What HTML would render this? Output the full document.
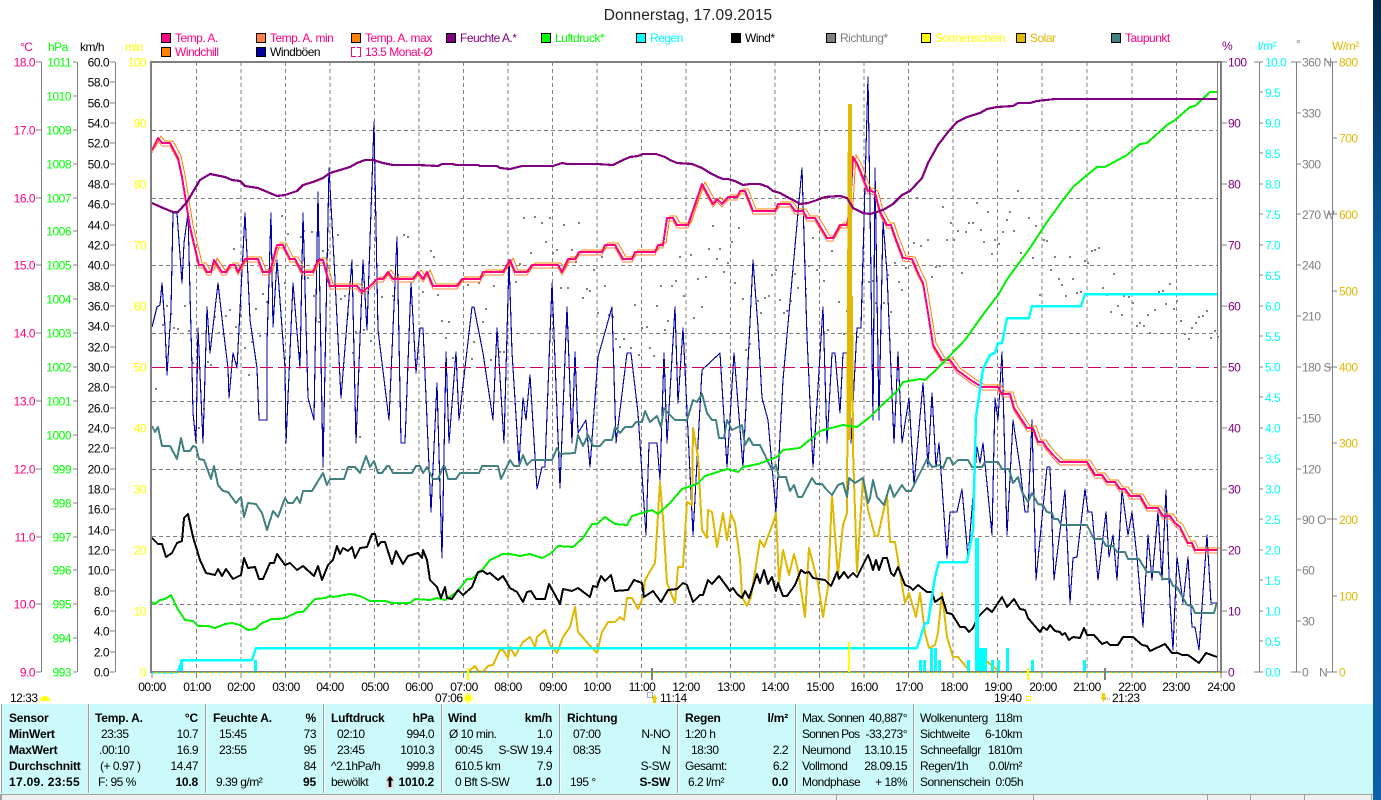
<!DOCTYPE html>
<html lang="de"><head><meta charset="utf-8"><title>Donnerstag, 17.09.2015</title>
<style>
html,body{margin:0;padding:0;background:#fff;width:1381px;height:800px;overflow:hidden}
svg{display:block}
text{font-family:"Liberation Sans",sans-serif;font-size:12px;letter-spacing:-.5px;fill:#000}
.e{text-anchor:end}
.b{font-weight:bold;letter-spacing:-.2px}
.n{letter-spacing:-.8px}
.l{fill:#ff0080}
.g{fill:#00ff00}
.y{fill:#ffff00}
.p{fill:#800080}
.c{fill:#00ffff}
.s{fill:#808080}
.o{fill:#e0b800}
polyline{fill:none;stroke-linejoin:round;shape-rendering:crispEdges}
</style></head><body>
<svg width="1381" height="800" viewBox="0 0 1381 800" xmlns="http://www.w3.org/2000/svg">
<defs><linearGradient id="dk" x1="0" y1="0" x2="0" y2="1"><stop offset="0" stop-color="#03264a"/><stop offset=".3" stop-color="#0a5596"/><stop offset="1" stop-color="#0d5fa8"/></linearGradient>
<polyline id="t" points="152,150 158,138 162,143 170,143 178,158 182,177 190,227 199,265 203,265 207,272 211,272 214,260 218,266 222,272 226,272 230,265 235,265 238,272 245,259 258,259 263,272 270,272 277,245 283,245 290,259 295,259 302,272 313,272 318,260 323,260 330,286 357,286 362,292 370,286 377,279 383,279 388,272 393,279 413,279 418,272 423,279 427,272 433,286 457,286 462,279 480,279 483,272 503,272 510,260 515,272 527,272 532,265 558,265 562,272 568,259 575,259 579,252 602,252 605,245 615,245 623,259 632,259 635,252 655,252 658,245 663,245 667,218 673,218 677,225 688,225 702,184 713,204 717,199 722,204 728,197 737,197 740,191 745,191 753,211 775,211 778,204 790,204 795,211 803,211 807,218 815,218 827,238 833,238 840,225 847,225 850,207 853,157 858,165 868,191 870,190 875,193 880,212 887,225 891,225 895,237 903,258 912,259 918,273 923,283 928,313 933,345 942,360 950,360 957,370 972,381 982,387 998,387 1002,394 1010,394 1014,408 1027,428 1033,428 1038,442 1043,442 1047,448 1053,455 1060,462 1087,462 1095,475 1102,475 1107,482 1115,482 1120,489 1125,489 1130,496 1140,496 1147,508 1158,508 1163,516 1170,516 1175,523 1180,527 1188,543 1192,543 1195,550 1217,550"/></defs>

<rect x="1373" y="0" width="8" height="800" fill="url(#dk)"/>

<text x="688" y="20" text-anchor="middle" style="font-size:15.5px;letter-spacing:.1px;fill:#222">Donnerstag, 17.09.2015</text>

<!-- legend -->
<g stroke="#000" stroke-width="1" shape-rendering="crispEdges">
<rect x="161.5" y="33.5" width="9" height="9" fill="#ff0080"/><rect x="256.5" y="33.5" width="9" height="9" fill="#ff8040"/><rect x="351.5" y="33.5" width="9" height="9" fill="#ff8000"/><rect x="446.5" y="33.5" width="9" height="9" fill="#800080"/><rect x="541.5" y="33.5" width="9" height="9" fill="#00ff00"/><rect x="636.5" y="33.5" width="9" height="9" fill="#00ffff"/><rect x="731.5" y="33.5" width="9" height="9" fill="#000"/><rect x="826.5" y="33.5" width="9" height="9" fill="#808080"/><rect x="921.5" y="33.5" width="9" height="9" fill="#ffff00"/><rect x="1016.5" y="33.5" width="9" height="9" fill="#e0b800"/><rect x="1111.5" y="33.5" width="9" height="9" fill="#408080"/>
<rect x="161.5" y="47.5" width="9" height="9" fill="#ff8000"/><rect x="256.5" y="47.5" width="9" height="9" fill="#0000a0"/>
<path d="M355 47.500H351.500V56.500H356M357 47.500h3.500v9H358" fill="none" stroke="#ff0080"/>
</g>
<text x="175" y="42" class="l">Temp. A.</text><text x="270" y="42" class="l">Temp. A. min</text><text x="365" y="42" class="l">Temp. A. max</text><text x="460" y="42" class="p">Feuchte A.*</text><text x="555" y="42" class="g">Luftdruck*</text><text x="650" y="42" class="c">Regen</text><text x="745" y="42">Wind*</text><text x="840" y="42" class="s">Richtung*</text><text x="935" y="42" class="y">Sonnenschein</text><text x="1030" y="42" class="o">Solar</text><text x="1125" y="42" class="l">Taupunkt</text>
<text x="175" y="56" class="l">Windchill</text><text x="270" y="56">Windböen</text><text x="365" y="56" class="l">13.5 Monat-Ø</text>

<!-- axis headers -->
<text x="20" y="51" class="l">°C</text><text x="48" y="51" class="g">hPa</text><text x="80" y="51">km/h</text><text x="125" y="51" class="y">min</text>
<text x="1222" y="50" class="p">%</text><text x="1258" y="50" class="c">l/m²</text><text x="1296" y="48" class="s">°</text><text x="1332" y="50" class="o">W/m²</text>

<!-- left axes -->
<path shape-rendering="crispEdges" stroke="#808080" fill="none" d="M41.5 62V672M36 62h5M36 130h5M36 198h5M36 265h5M36 333h5M36 401h5M36 469h5M36 537h5M36 604h5M36 672h5
M77.5 62V672M73 62h4M73 96h4M73 130h4M73 164h4M73 198h4M73 231h4M73 265h4M73 299h4M73 333h4M73 367h4M73 401h4M73 435h4M73 469h4M73 503h4M73 537h4M73 570h4M73 604h4M73 638h4M73 672h4
M115.5 62V672M110 62h5M110 82h5M110 103h5M110 123h5M110 143h5M110 164h5M110 184h5M110 204h5M110 225h5M110 245h5M110 265h5M110 286h5M110 306h5M110 326h5M110 347h5M110 367h5M110 387h5M110 408h5M110 428h5M110 448h5M110 469h5M110 489h5M110 509h5M110 530h5M110 550h5M110 570h5M110 591h5M110 611h5M110 631h5M110 652h5M110 672h5"/>
<g class="e">
<text x="35" y="66.5" class="e l">18.0</text><text x="35" y="134.5" class="e l">17.0</text><text x="35" y="202.5" class="e l">16.0</text><text x="35" y="269.5" class="e l">15.0</text><text x="35" y="337.5" class="e l">14.0</text><text x="35" y="405.5" class="e l">13.0</text><text x="35" y="473.5" class="e l">12.0</text><text x="35" y="541.5" class="e l">11.0</text><text x="35" y="608.5" class="e l">10.0</text><text x="35" y="676.5" class="e l">9.0</text>
<text x="71" y="66.5" class="e g">1011</text><text x="71" y="100.5" class="e g">1010</text><text x="71" y="134.5" class="e g">1009</text><text x="71" y="168.5" class="e g">1008</text><text x="71" y="202.5" class="e g">1007</text><text x="71" y="235.5" class="e g">1006</text><text x="71" y="269.5" class="e g">1005</text><text x="71" y="303.5" class="e g">1004</text><text x="71" y="337.5" class="e g">1003</text><text x="71" y="371.5" class="e g">1002</text><text x="71" y="405.5" class="e g">1001</text><text x="71" y="439.5" class="e g">1000</text><text x="71" y="473.5" class="e g">999</text><text x="71" y="507.5" class="e g">998</text><text x="71" y="541.5" class="e g">997</text><text x="71" y="574.5" class="e g">996</text><text x="71" y="608.5" class="e g">995</text><text x="71" y="642.5" class="e g">994</text><text x="71" y="676.5" class="e g">993</text>
<text x="109" y="66.5" class="e">60.0</text><text x="109" y="86.5" class="e">58.0</text><text x="109" y="107.5" class="e">56.0</text><text x="109" y="127.5" class="e">54.0</text><text x="109" y="147.5" class="e">52.0</text><text x="109" y="168.5" class="e">50.0</text><text x="109" y="188.5" class="e">48.0</text><text x="109" y="208.5" class="e">46.0</text><text x="109" y="229.5" class="e">44.0</text><text x="109" y="249.5" class="e">42.0</text><text x="109" y="269.5" class="e">40.0</text><text x="109" y="290.5" class="e">38.0</text><text x="109" y="310.5" class="e">36.0</text><text x="109" y="330.5" class="e">34.0</text><text x="109" y="351.5" class="e">32.0</text><text x="109" y="371.5" class="e">30.0</text><text x="109" y="391.5" class="e">28.0</text><text x="109" y="412.5" class="e">26.0</text><text x="109" y="432.5" class="e">24.0</text><text x="109" y="452.5" class="e">22.0</text><text x="109" y="473.5" class="e">20.0</text><text x="109" y="493.5" class="e">18.0</text><text x="109" y="513.5" class="e">16.0</text><text x="109" y="534.5" class="e">14.0</text><text x="109" y="554.5" class="e">12.0</text><text x="109" y="574.5" class="e">10.0</text><text x="109" y="595.5" class="e">8.0</text><text x="109" y="615.5" class="e">6.0</text><text x="109" y="635.5" class="e">4.0</text><text x="109" y="656.5" class="e">2.0</text><text x="109" y="676.5" class="e">0.0</text>
<text x="146" y="66.5" class="e y">100</text><text x="146" y="127.5" class="e y">90</text><text x="146" y="188.5" class="e y">80</text><text x="146" y="249.5" class="e y">70</text><text x="146" y="310.5" class="e y">60</text><text x="146" y="371.5" class="e y">50</text><text x="146" y="432.5" class="e y">40</text><text x="146" y="493.5" class="e y">30</text><text x="146" y="554.5" class="e y">20</text><text x="146" y="615.5" class="e y">10</text><text x="146" y="676.5" class="e y">0</text>
</g>

<!-- right axes -->
<path shape-rendering="crispEdges" stroke="#808080" fill="none" d="M1222 62h5M1222 123h5M1222 184h5M1222 245h5M1222 306h5M1222 367h5M1222 428h5M1222 489h5M1222 550h5M1222 611h5M1222 672h5
M1259.5 62V672M1254 62h5M1254 672h5M1259 62h4M1259 92h4M1259 123h4M1259 153h4M1259 184h4M1259 214h4M1259 245h4M1259 275h4M1259 306h4M1259 336h4M1259 367h4M1259 397h4M1259 428h4M1259 458h4M1259 489h4M1259 519h4M1259 550h4M1259 580h4M1259 611h4M1259 641h4M1259 672h4
M1296.5 62V672M1291 62h5M1291 672h5M1296 62h5M1296 113h5M1296 164h5M1296 214h5M1296 265h5M1296 316h5M1296 367h5M1296 418h5M1296 469h5M1296 519h5M1296 570h5M1296 621h5M1296 672h5
M1332.5 62V672M1327 62h5M1327 214h5M1327 367h5M1327 519h5M1327 672h5M1332 62h5M1332 138h5M1332 214h5M1332 291h5M1332 367h5M1332 443h5M1332 519h5M1332 596h5M1332 672h5"/>
<text x="1228" y="66.5" class="p">100</text><text x="1228" y="127.5" class="p">90</text><text x="1228" y="188.5" class="p">80</text><text x="1228" y="249.5" class="p">70</text><text x="1228" y="310.5" class="p">60</text><text x="1228" y="371.5" class="p">50</text><text x="1228" y="432.5" class="p">40</text><text x="1228" y="493.5" class="p">30</text><text x="1228" y="554.5" class="p">20</text><text x="1228" y="615.5" class="p">10</text><text x="1228" y="676.5" class="p">0</text>
<text x="1265" y="66.5" class="c">10.0</text><text x="1265" y="97" class="c">9.5</text><text x="1265" y="127.5" class="c">9.0</text><text x="1265" y="158" class="c">8.5</text><text x="1265" y="188.5" class="c">8.0</text><text x="1265" y="219" class="c">7.5</text><text x="1265" y="249.5" class="c">7.0</text><text x="1265" y="280" class="c">6.5</text><text x="1265" y="310.5" class="c">6.0</text><text x="1265" y="341" class="c">5.5</text><text x="1265" y="371.5" class="c">5.0</text><text x="1265" y="402" class="c">4.5</text><text x="1265" y="432.5" class="c">4.0</text><text x="1265" y="463" class="c">3.5</text><text x="1265" y="493.5" class="c">3.0</text><text x="1265" y="524" class="c">2.5</text><text x="1265" y="554.5" class="c">2.0</text><text x="1265" y="585" class="c">1.5</text><text x="1265" y="615.5" class="c">1.0</text><text x="1265" y="646" class="c">0.5</text><text x="1265" y="676.5" class="c">0.0</text>
<text x="1302" y="66.5" class="s">360 N</text><text x="1302" y="117.5" class="s">330</text><text x="1302" y="168.5" class="s">300</text><text x="1302" y="219" class="s">270 W</text><text x="1302" y="269.5" class="s">240</text><text x="1302" y="320.5" class="s">210</text><text x="1302" y="371.5" class="s">180 S</text><text x="1302" y="422.5" class="s">150</text><text x="1302" y="473.5" class="s">120</text><text x="1302" y="524" class="s">90 O</text><text x="1302" y="574.5" class="s">60</text><text x="1302" y="625.5" class="s">30</text><text x="1302" y="676.5" class="s">0</text><text x="1319" y="676.5" class="s">N</text>
<text x="1339" y="66.5" class="o">800</text><text x="1339" y="142.5" class="o">700</text><text x="1339" y="219" class="o">600</text><text x="1339" y="295.5" class="o">500</text><text x="1339" y="371.5" class="o">400</text><text x="1339" y="447.5" class="o">300</text><text x="1339" y="524" class="o">200</text><text x="1339" y="600.5" class="o">100</text><text x="1339" y="676.5" class="o">0</text>

<!-- grid -->
<path shape-rendering="crispEdges" stroke="#808080" fill="none" stroke-dasharray="4 3" d="M196.5 62V672M241 62V672M285.5 62V672M330 62V672M374.5 62V672M419 62V672M463.5 62V672M508 62V672M552.5 62V672M597 62V672M641.5 62V672M686 62V672M730.5 62V672M775 62V672M819.5 62V672M864 62V672M908.5 62V672M953 62V672M997.5 62V672M1042 62V672M1087 62V672M1132 62V672M1176.5 62V672
M152 130.5H1217M152 198.5H1217M152 265.5H1217M152 333.5H1217M152 401.5H1217M152 469.5H1217M152 536.5H1217M152 604.5H1217"/>
<path shape-rendering="crispEdges" stroke="#808080" fill="none" d="M152 672v6M196.5 672v6M241 672v6M285.5 672v6M330 672v6M374.5 672v6M419 672v6M463.5 672v6M508 672v6M552.5 672v6M597 672v6M641.5 672v6M686 672v6M730.5 672v6M775 672v6M819.5 672v6M864 672v6M908.5 672v6M953 672v6M997.5 672v6M1042 672v6M1087 672v6M1132 672v6M1176.5 672v6M1221 672v6"/>

<!-- direction dots -->
<path stroke="#808080" stroke-width="2" fill="none" shape-rendering="crispEdges" d="M281 216h2M287 234h2M303 231h2M311 232h2M300 237h2M337 235h2M233 249h2M403 235h2M407 237h2M396 250h2M430 251h2M433 257h2M327 250h2M322 251h2M307 278h2M181 277h2M284 283h2M262 294h2M313 296h2M266 302h2M184 306h2M166 306h2M170 314h2M162 325h2M173 328h2M177 329h2M188 331h2M229 310h2M225 316h2M214 317h2M255 309h2M240 306h2M240 316h2M235 327h2M218 333h2M222 334h2M259 336h2M251 342h2M244 348h2M340 299h2M344 296h2M381 297h2M392 296h2M422 292h2M437 295h2M457 284h2M467 285h2M478 283h2M493 286h2M485 309h2M482 322h2M448 322h2M441 321h2M445 338h2M497 337h2M473 342h2M499 352h2M503 352h2M363 330h2M355 332h2M347 315h2M318 322h2M370 341h2M352 353h2M452 358h2M471 359h2M490 360h2M192 363h2M196 358h2M207 362h2M210 365h2M248 375h2M155 389h2M203 409h2M198 428h2M359 437h2M523 218h2M534 217h2M541 223h2M549 218h2M563 225h2M578 223h2M545 242h2M530 253h2M552 253h2M556 250h2M571 250h2M575 262h2M519 264h2M515 282h2M560 288h2M567 288h2M586 289h2M589 291h2M582 298h2M604 286h2M601 257h2M593 270h2M712 226h2M738 228h2M731 242h2M708 249h2M719 249h2M690 255h2M679 257h2M716 259h2M727 263h2M723 272h2M705 277h2M697 279h2M675 281h2M671 286h2M660 286h2M734 283h2M634 305h2M656 306h2M683 296h2M701 307h2M742 299h2M757 301h2M764 298h2M768 296h2M779 300h2M790 301h2M771 275h2M775 270h2M797 288h2M805 289h2M794 274h2M823 281h2M831 251h2M812 238h2M808 266h2M816 270h2M848 299h2M838 302h2M861 302h2M868 282h2M846 311h2M693 318h2M667 321h2M664 330h2M646 327h2M641 328h2M612 317h2M608 315h2M597 313h2M615 339h2M623 339h2M619 347h2M630 348h2M638 355h2M649 348h2M653 356h2M745 350h2M749 344h2M786 311h2M783 313h2M760 313h2M827 330h2M843 334h2M857 337h2M916 198h2M942 207h2M976 203h2M1017 191h2M987 212h2M1009 212h2M1006 220h2M1028 218h2M950 223h2M968 223h2M972 223h2M1035 226h2M957 231h2M965 232h2M980 230h2M1002 232h2M1013 231h2M913 243h2M920 246h2M927 240h2M946 240h2M953 240h2M983 242h2M994 240h2M998 244h2M1043 240h2M1046 241h2M1020 253h2M991 254h2M1032 258h2M1054 257h2M1069 257h2M1091 251h2M1094 250h2M1098 248h2M1084 261h2M1087 263h2M939 266h2M935 267h2M905 268h2M894 263h2M887 275h2M931 277h2M961 273h2M1050 270h2M1058 279h2M1072 279h2M1113 274h2M1061 285h2M898 282h2M901 290h2M1169 284h2M1162 291h2M1158 292h2M1102 288h2M1080 292h2M1076 293h2M1065 296h2M1039 295h2M1106 295h2M1123 296h2M1128 297h2M1132 303h2M1176 301h2M1165 304h2M1117 306h2M1110 312h2M1173 309h2M1154 310h2M1147 315h2M1121 315h2M1206 311h2M1202 316h2M1198 317h2M1195 323h2M1139 323h2M1136 326h2M1143 326h2M1180 321h2M1191 328h2M1149 333h2M1184 334h2M1188 339h2M1214 331h2M1210 338h2M1217 337h2M890 312h2M883 303h2M875 303h2M872 281h2"/>

<!-- gusts -->
<polyline stroke="#0000a8" stroke-width="1.1" points="152,327 157,307 160,305 162,283 165,327 167,375 171,310 173,213 177,213 182,283 184,243 188,213 190,293 192,368 193,413 196,443 198,328 203,443 207,307 210,353 218,283 223,327 228,368 229,398 233,353 237,368 245,213 250,320 257,368 259,420 267,420 267,343 271,213 273,327 277,260 285,368 286,443 293,283 300,368 303,213 308,398 314,420 318,192 323,467 329,168 334,260 341,398 352,260 356,443 363,260 367,330 374,122 378,330 389,420 397,237 401,443 405,443 411,283 416,373 420,328 423,328 431,512 437,383 442,558 446,352 449,443 456,352 459,420 472,307 474,307 483,353 493,420 497,328 504,443 509,260 512,352 519,464 523,398 526,420 530,375 537,489 542,467 545,467 552,283 560,488 567,307 572,443 575,352 578,433 586,420 590,467 598,357 612,307 616,443 627,353 631,353 638,413 646,535 649,443 657,443 660,480 664,353 667,443 675,307 678,403 683,328 693,535 702,370 720,353 727,467 734,353 743,467 753,260 758,327 762,398 768,420 776,512 783,380 802,168 807,337 813,467 823,307 827,443 832,353 835,353 840,413 843,353 847,353 851,443 857,328 861,328 868,77 870,207 873,420 875,168 879,420 883,220 887,273 894,443 898,352 902,443 909,398 914,485 923,383 928,467 932,393 936,467 939,443 947,558 950,512 957,512 962,489 968,558 977,447 980,463 983,443 992,535 995,398 998,420 1002,352 1007,535 1013,420 1020,467 1025,512 1028,512 1032,420 1036,580 1047,467 1050,467 1054,580 1065,490 1070,603 1073,558 1077,557 1085,489 1088,512 1092,512 1098,580 1106,512 1109,557 1113,535 1117,580 1122,490 1128,535 1132,512 1137,557 1143,627 1148,535 1152,580 1158,512 1162,580 1166,490 1170,603 1173,650 1177,557 1183,603 1188,557 1192,627 1195,627 1199,650 1207,535 1211,603 1217,603"/>

<!-- monthly average -->
<path shape-rendering="crispEdges" stroke="#d00060" fill="none" d="M152 367.5H1217" stroke-dasharray="13 5"/>

<!-- temperature -->
<use href="#t" fill="none" stroke="#ff8040" stroke-width="1" transform="translate(0,3)"/>
<use href="#t" fill="none" stroke="#ff8000" stroke-width="1" transform="translate(3,-2)"/>
<use href="#t" fill="none" stroke="#ff0080" stroke-width="2"/>

<!-- solar -->
<polyline stroke="#e0b800" stroke-width="2" points="468,672 475,666 478,671 483,672 488,666 493,665 500,650 503,650 508,658 510,647 515,656 523,642 530,637 535,647 537,637 545,630 550,645 557,653 563,637 570,627 575,607 578,632 592,648 597,653 602,632 608,622 615,622 620,617 624,620 627,598 632,598 638,609 643,597 645,580 655,563 660,482 663,518 667,583 675,603 678,567 683,567 687,502 692,505 693,428 698,457 702,530 707,538 708,510 712,512 717,547 723,513 727,540 731,514 735,523 740,560 742,597 747,606 751,597 760,540 764,547 773,523 776,513 779,583 783,550 789,575 794,554 798,570 805,617 809,548 818,583 823,617 828,587 832,495 838,575 843,525 847,513 848,300 849,105 851,105 851,400 852,297 853,450 857,572 863,478 868,510 875,536 878,536 887,495 890,542 895,542 905,603 909,593 916,617 920,593 925,633 929,648 935,645 938,633 942,593 947,637 953,657 958,657 967,668 970,672 980,672 980,660 985,660 1000,672 1217,672"/>
<path shape-rendering="crispEdges" stroke="#e0b800" stroke-width="3" fill="none" d="M849.5 105V440"/>

<!-- dew point -->
<polyline stroke="#408080" stroke-width="2" points="152,426 155,432 158,427 162,446 170,446 177,459 181,438 184,451 190,451 193,446 196,447 199,459 204,460 211,479 214,466 218,485 223,491 228,492 236,503 241,497 244,517 248,503 256,504 262,513 267,530 273,511 278,517 285,498 288,503 293,503 297,497 300,503 303,491 312,491 323,473 327,485 330,479 344,479 348,467 355,467 360,473 366,456 370,467 374,461 378,473 382,473 387,466 389,466 393,473 412,473 416,466 420,466 423,473 427,467 433,479 438,479 443,467 445,467 448,479 456,479 460,473 479,473 482,466 498,466 501,479 510,460 514,466 519,466 523,455 527,465 532,460 552,460 557,448 560,454 575,453 578,435 583,446 588,435 593,446 600,446 605,440 612,440 615,427 620,433 625,427 632,427 636,422 642,422 645,411 650,422 657,416 661,427 664,408 668,413 675,420 687,420 693,400 697,402 702,394 707,413 712,420 716,420 719,438 724,438 727,420 732,430 742,425 745,445 749,438 753,445 760,445 772,470 776,465 779,477 786,477 790,491 794,485 798,497 802,497 812,478 816,484 822,484 826,489 832,495 838,485 843,483 847,497 849,478 855,483 863,478 868,503 870,498 873,480 877,497 884,505 890,485 894,497 902,485 906,491 911,491 920,473 927,459 932,467 940,465 943,468 947,458 950,458 953,465 958,460 968,460 972,467 982,467 985,462 998,462 1002,469 1009,469 1013,483 1018,477 1022,492 1028,502 1032,493 1038,504 1043,505 1047,512 1052,513 1054,519 1058,519 1061,525 1087,525 1094,539 1102,539 1106,546 1113,546 1117,552 1125,552 1128,559 1139,559 1147,572 1159,572 1163,579 1170,579 1173,586 1177,587 1187,605 1192,606 1195,613 1214,613 1217,602"/>

<!-- pressure -->
<polyline stroke="#00f000" stroke-width="2" points="152,602 155,604 160,600 165,599 171,595 177,608 185,620 193,621 198,626 208,626 215,628 225,624 232,623 240,625 248,630 255,629 262,623 272,619 278,619 285,618 298,612 303,612 315,599 325,598 330,596 333,597 350,594 360,596 370,601 385,601 392,603 410,603 415,599 430,600 437,598 445,600 457,592 467,579 472,579 483,569 490,560 503,554 510,554 520,556 530,554 542,558 550,554 558,546 573,547 583,538 592,524 597,524 605,517 615,524 627,525 632,516 652,510 658,514 670,503 682,489 697,484 705,476 727,469 738,472 743,467 758,464 777,457 783,450 800,448 812,438 820,431 843,425 857,427 870,417 880,407 898,390 903,382 920,379 925,380 937,369 965,340 977,323 985,312 998,295 1008,278 1030,248 1047,222 1063,200 1073,187 1087,175 1097,167 1105,167 1127,155 1140,144 1147,143 1167,125 1175,120 1190,107 1195,106 1210,92 1217,92"/>

<!-- wind -->
<polyline stroke="#000" stroke-width="2" points="152,538 158,544 162,544 166,557 172,553 177,543 182,541 184,518 188,514 193,537 200,560 206,573 215,575 218,569 222,576 226,569 233,579 241,575 244,558 248,568 255,567 259,579 263,579 270,563 274,563 277,554 285,565 290,563 297,570 303,566 314,576 318,566 322,580 328,565 333,560 337,546 340,554 343,548 348,551 352,547 355,558 360,548 367,547 372,534 375,534 378,546 381,542 385,542 392,564 396,551 403,564 408,556 418,553 422,558 423,550 427,560 430,580 437,587 441,598 445,587 447,598 452,599 458,590 463,595 472,587 478,572 483,571 487,574 490,573 498,580 503,576 510,588 517,592 523,602 527,592 531,591 536,599 545,599 549,584 560,604 563,589 572,591 578,588 590,597 593,586 597,587 601,576 605,581 611,575 615,591 628,590 634,580 642,583 644,597 653,591 661,602 668,590 677,589 683,583 687,585 693,602 700,595 703,595 708,580 712,584 719,576 730,591 733,588 737,594 742,598 745,591 749,598 757,574 760,583 764,570 768,584 772,577 776,591 778,583 783,596 787,596 795,585 801,570 805,573 809,572 813,578 825,580 831,586 837,572 839,579 844,572 848,578 853,573 857,577 868,555 870,560 873,570 876,560 879,570 883,558 887,558 891,573 894,576 898,567 905,585 910,587 913,590 918,585 927,592 932,592 935,602 942,597 947,613 952,614 960,627 965,627 969,632 973,628 978,617 987,608 992,612 1002,597 1007,607 1014,599 1020,609 1025,610 1028,618 1040,632 1043,627 1047,630 1050,625 1055,631 1060,632 1062,635 1065,633 1069,640 1073,637 1080,638 1084,628 1087,635 1094,635 1102,644 1107,642 1110,645 1118,645 1123,637 1133,637 1142,645 1147,646 1150,651 1165,644 1172,653 1178,653 1182,655 1188,655 1199,663 1206,653 1217,657"/>

<!-- humidity -->
<polyline stroke="#800080" stroke-width="2.2" points="152,203 163,208 173,212 178,212 187,202 200,180 210,174 225,177 232,180 240,181 245,186 258,188 277,196 285,195 297,191 303,185 313,182 323,178 330,173 350,167 357,163 365,160 373,160 383,163 393,165 418,165 438,166 442,164 452,164 457,165 478,165 480,166 497,166 500,168 510,169 522,166 553,166 562,163 567,164 597,164 613,165 623,160 630,157 638,156 643,154 656,154 665,157 670,160 677,163 692,164 702,168 710,173 718,177 723,179 728,179 735,181 743,185 750,184 760,184 768,187 773,191 780,193 787,197 795,201 800,204 808,203 817,200 825,197 840,196 847,198 853,208 863,213 870,214 883,210 893,204 902,195 910,191 922,178 928,163 938,145 948,132 957,122 967,117 980,113 987,109 997,107 1013,106 1018,103 1030,103 1037,101 1055,99 1217,99"/>

<!-- rain -->
<path shape-rendering="crispEdges" fill="#00ffff" d="M180 660h3v12h-3zM254 660h3v12h-3zM919 660h3v12h-3zM923 660h3v12h-3zM930 648h3v24h-3zM934 648h3v24h-3zM938 660h3v12h-3zM967 660h3v12h-3zM975 538h4v134h-4zM979 648h8v24h-8zM991 660h3v12h-3zM997 660h3v12h-3zM1006 648h3v24h-3zM1031 660h3v12h-3zM1083 660h3v12h-3z"/>
<polyline stroke="#00ffff" stroke-width="2.5" points="152,672 178,672 182,660 252,660 256,648 917,648 925,623 928,623 935,577 939,562 967,562 973,530 976,417 983,369 990,355 995,353 998,343 1002,343 1007,318 1029,318 1032,306 1081,306 1085,294 1217,294"/>

<!-- frame -->
<path shape-rendering="crispEdges" fill="#808080" d="M150 61h1071v2H150zM150 61h2v612h-2zM1217 63h1v609h-1zM1220 61h2v612h-2zM150 671h1072v2H150z"/>
<path shape-rendering="crispEdges" stroke="#e0b800" fill="none" d="M152 672.5H1220"/>
<path shape-rendering="crispEdges" stroke="#00e0e0" fill="none" stroke-dasharray="2 4" d="M152 672.5H1220"/>

<!-- sun markers -->
<path shape-rendering="crispEdges" fill="#ffff00" d="M467 668h2v12h-2zM1027 668h2v12h-2zM848 642h2v30h-2z"/>
<path shape-rendering="crispEdges" fill="#808080" d="M651 668h2v12h-2zM1104 668h2v12h-2z"/>

<!-- x labels -->
<g text-anchor="middle">
<text x="152" y="691">00:00</text><text x="197" y="691">01:00</text><text x="241" y="691">02:00</text><text x="286" y="691">03:00</text><text x="330" y="691">04:00</text><text x="375" y="691">05:00</text><text x="419" y="691">06:00</text><text x="464" y="691">07:00</text><text x="508" y="691">08:00</text><text x="553" y="691">09:00</text><text x="597" y="691">10:00</text><text x="642" y="691">11:00</text><text x="686" y="691">12:00</text><text x="731" y="691">13:00</text><text x="775" y="691">14:00</text><text x="820" y="691">15:00</text><text x="864" y="691">16:00</text><text x="909" y="691">17:00</text><text x="954" y="691">18:00</text><text x="998" y="691">19:00</text><text x="1043" y="691">20:00</text><text x="1087" y="691">21:00</text><text x="1132" y="691">22:00</text><text x="1176" y="691">23:00</text><text x="1221" y="691">24:00</text>
</g>
<text x="10" y="702">12:33</text><text x="435" y="702">07:06</text><text x="660" y="702">11:14</text><text x="994" y="702">19:40</text><text x="1112" y="702">21:23</text>
<path fill="#ffff00" d="M40 701a5 5 0 0 1 10 0z"/>
<circle cx="468" cy="698" r="3.500" fill="#ffff00"/><circle cx="468" cy="698" r="5" fill="none" stroke="#ffff00" stroke-dasharray="1.500 1.500"/>
<rect x="647.500" y="692.500" width="5" height="5" fill="none" stroke="#5050c0" stroke-dasharray="1 1"/>
<path fill="#f0d000" d="M654.500 694l3 5h-1.500v4h-3v-4h-1.500z"/>
<rect x="1026.500" y="696.500" width="4" height="4" fill="none" stroke="#ffff00"/>
<path fill="#f0d000" d="M1103.500 702l-3-5h1.500v-4h3v4h1.500z"/>
<path stroke="#7070c0" stroke-dasharray="1 1" d="M1105 699h6" fill="none"/>

<!-- panel -->
<rect x="1" y="704" width="1372" height="90" fill="#ccfafa"/>
<path shape-rendering="crispEdges" fill="#a0a0a0" d="M88 704h1v89h-1zM205 704h1v89h-1zM323 704h1v89h-1zM441 704h1v89h-1zM559 704h1v89h-1zM677 704h1v89h-1zM795 704h1v89h-1zM913 704h1v89h-1zM1 704h1v89H1z"/>
<path shape-rendering="crispEdges" fill="#fff" d="M89 704h1v89h-1zM206 704h1v89h-1zM324 704h1v89h-1zM442 704h1v89h-1zM560 704h1v89h-1zM678 704h1v89h-1zM796 704h1v89h-1zM914 704h1v89h-1z"/>
<rect x="0" y="794" width="1373" height="6" fill="#f0f0f0"/>
<rect x="0" y="794" width="1373" height="1" fill="#a0a0a0"/>
<path shape-rendering="crispEdges" fill="#a0a0a0" d="M0 795h2v5H0zM836 795h1v5h-1zM1033 795h1v5h-1zM1207 795h1v5h-1zM1250 795h1v5h-1zM1304 795h1v5h-1zM1371 795h1v5h-1z"/>

<text x="9" y="722" class="b">Sensor</text><text x="9" y="738" class="b">MinWert</text><text x="9" y="754" class="b">MaxWert</text><text x="9" y="770" class="b">Durchschnitt</text><text x="9" y="786" class="b" style="letter-spacing:.3px">17.09. 23:55</text>

<text x="95" y="722" class="b">Temp. A.</text><text x="198" y="722" class="b e">°C</text>
<text x="101" y="738">23:35</text><text x="198" y="738" class="e">10.7</text>
<text x="99" y="754">.00:10</text><text x="198" y="754" class="e">16.9</text>
<text x="100" y="770">(+ 0.97 )</text><text x="198" y="770" class="e">14.47</text>
<text x="98" y="786">F: 95 %</text><text x="198" y="786" class="b e">10.8</text>

<text x="213" y="722" class="b">Feuchte A.</text><text x="316" y="722" class="b e">%</text>
<text x="219" y="738">15:45</text><text x="316" y="738" class="e">73</text>
<text x="219" y="754">23:55</text><text x="316" y="754" class="e">95</text>
<text x="316" y="770" class="e">84</text>
<text x="216" y="786">9.39 g/m²</text><text x="316" y="786" class="b e">95</text>

<text x="331" y="722" class="b">Luftdruck</text><text x="434" y="722" class="b e">hPa</text>
<text x="337" y="738">02:10</text><text x="434" y="738" class="e">994.0</text>
<text x="337" y="754">23:45</text><text x="434" y="754" class="e">1010.3</text>
<text x="331" y="770">^2.1hPa/h</text><text x="434" y="770" class="e">999.8</text>
<text x="331" y="786">bewölkt</text>
<rect x="386" y="776" width="8" height="13" fill="#e0e0e0"/><path fill="#000" d="M390 776l3.500 4.500h-2.200V787h-2.600v-6.500h-2.200z"/>
<text x="434" y="786" class="b e">1010.2</text>

<text x="448" y="722" class="b">Wind</text><text x="552" y="722" class="b e">km/h</text>
<text x="449" y="738">Ø 10 min.</text><text x="552" y="738" class="e">1.0</text>
<text x="455" y="754">00:45</text><text x="552" y="754" class="e">S-SW 19.4</text>
<text x="455" y="770">610.5 km</text><text x="552" y="770" class="e">7.9</text>
<text x="455" y="786">0 Bft S-SW</text><text x="552" y="786" class="b e">1.0</text>

<text x="567" y="722" class="b">Richtung</text>
<text x="573" y="738">07:00</text><text x="670" y="738" class="e">N-NO</text>
<text x="573" y="754">08:35</text><text x="670" y="754" class="e">N</text>
<text x="670" y="770" class="e">S-SW</text>
<text x="570" y="786">195 °</text><text x="670" y="786" class="b e">S-SW</text>

<text x="685" y="722" class="b">Regen</text><text x="788" y="722" class="b e">l/m²</text>
<text x="685" y="738">1:20 h</text>
<text x="691" y="754">18:30</text><text x="788" y="754" class="e">2.2</text>
<text x="685" y="770">Gesamt:</text><text x="788" y="770" class="e">6.2</text>
<text x="688" y="786">6.2 l/m²</text><text x="788" y="786" class="b e">0.0</text>

<text x="802" y="722" class="n">Max. Sonnen</text><text x="907" y="722" class="e">40,887°</text>
<text x="802" y="738" class="n">Sonnen Pos</text><text x="907" y="738" class="e">-33,273°</text>
<text x="802" y="754">Neumond</text><text x="907" y="754" class="e">13.10.15</text>
<text x="802" y="770">Vollmond</text><text x="907" y="770" class="e">28.09.15</text>
<text x="802" y="786">Mondphase</text><text x="907" y="786" class="e">+ 18%</text>

<text x="920" y="722">Wolkenunterg</text><text x="1022" y="722" class="e">118m</text>
<text x="920" y="738">Sichtweite</text><text x="1022" y="738" class="e">6-10km</text>
<text x="920" y="754">Schneefallgr</text><text x="1022" y="754" class="e">1810m</text>
<text x="920" y="770">Regen/1h</text><text x="1022" y="770" class="e">0.0l/m²</text>
<text x="920" y="786">Sonnenschein</text><text x="1023" y="786" class="e">0:05h</text>
</svg>
</body></html>
